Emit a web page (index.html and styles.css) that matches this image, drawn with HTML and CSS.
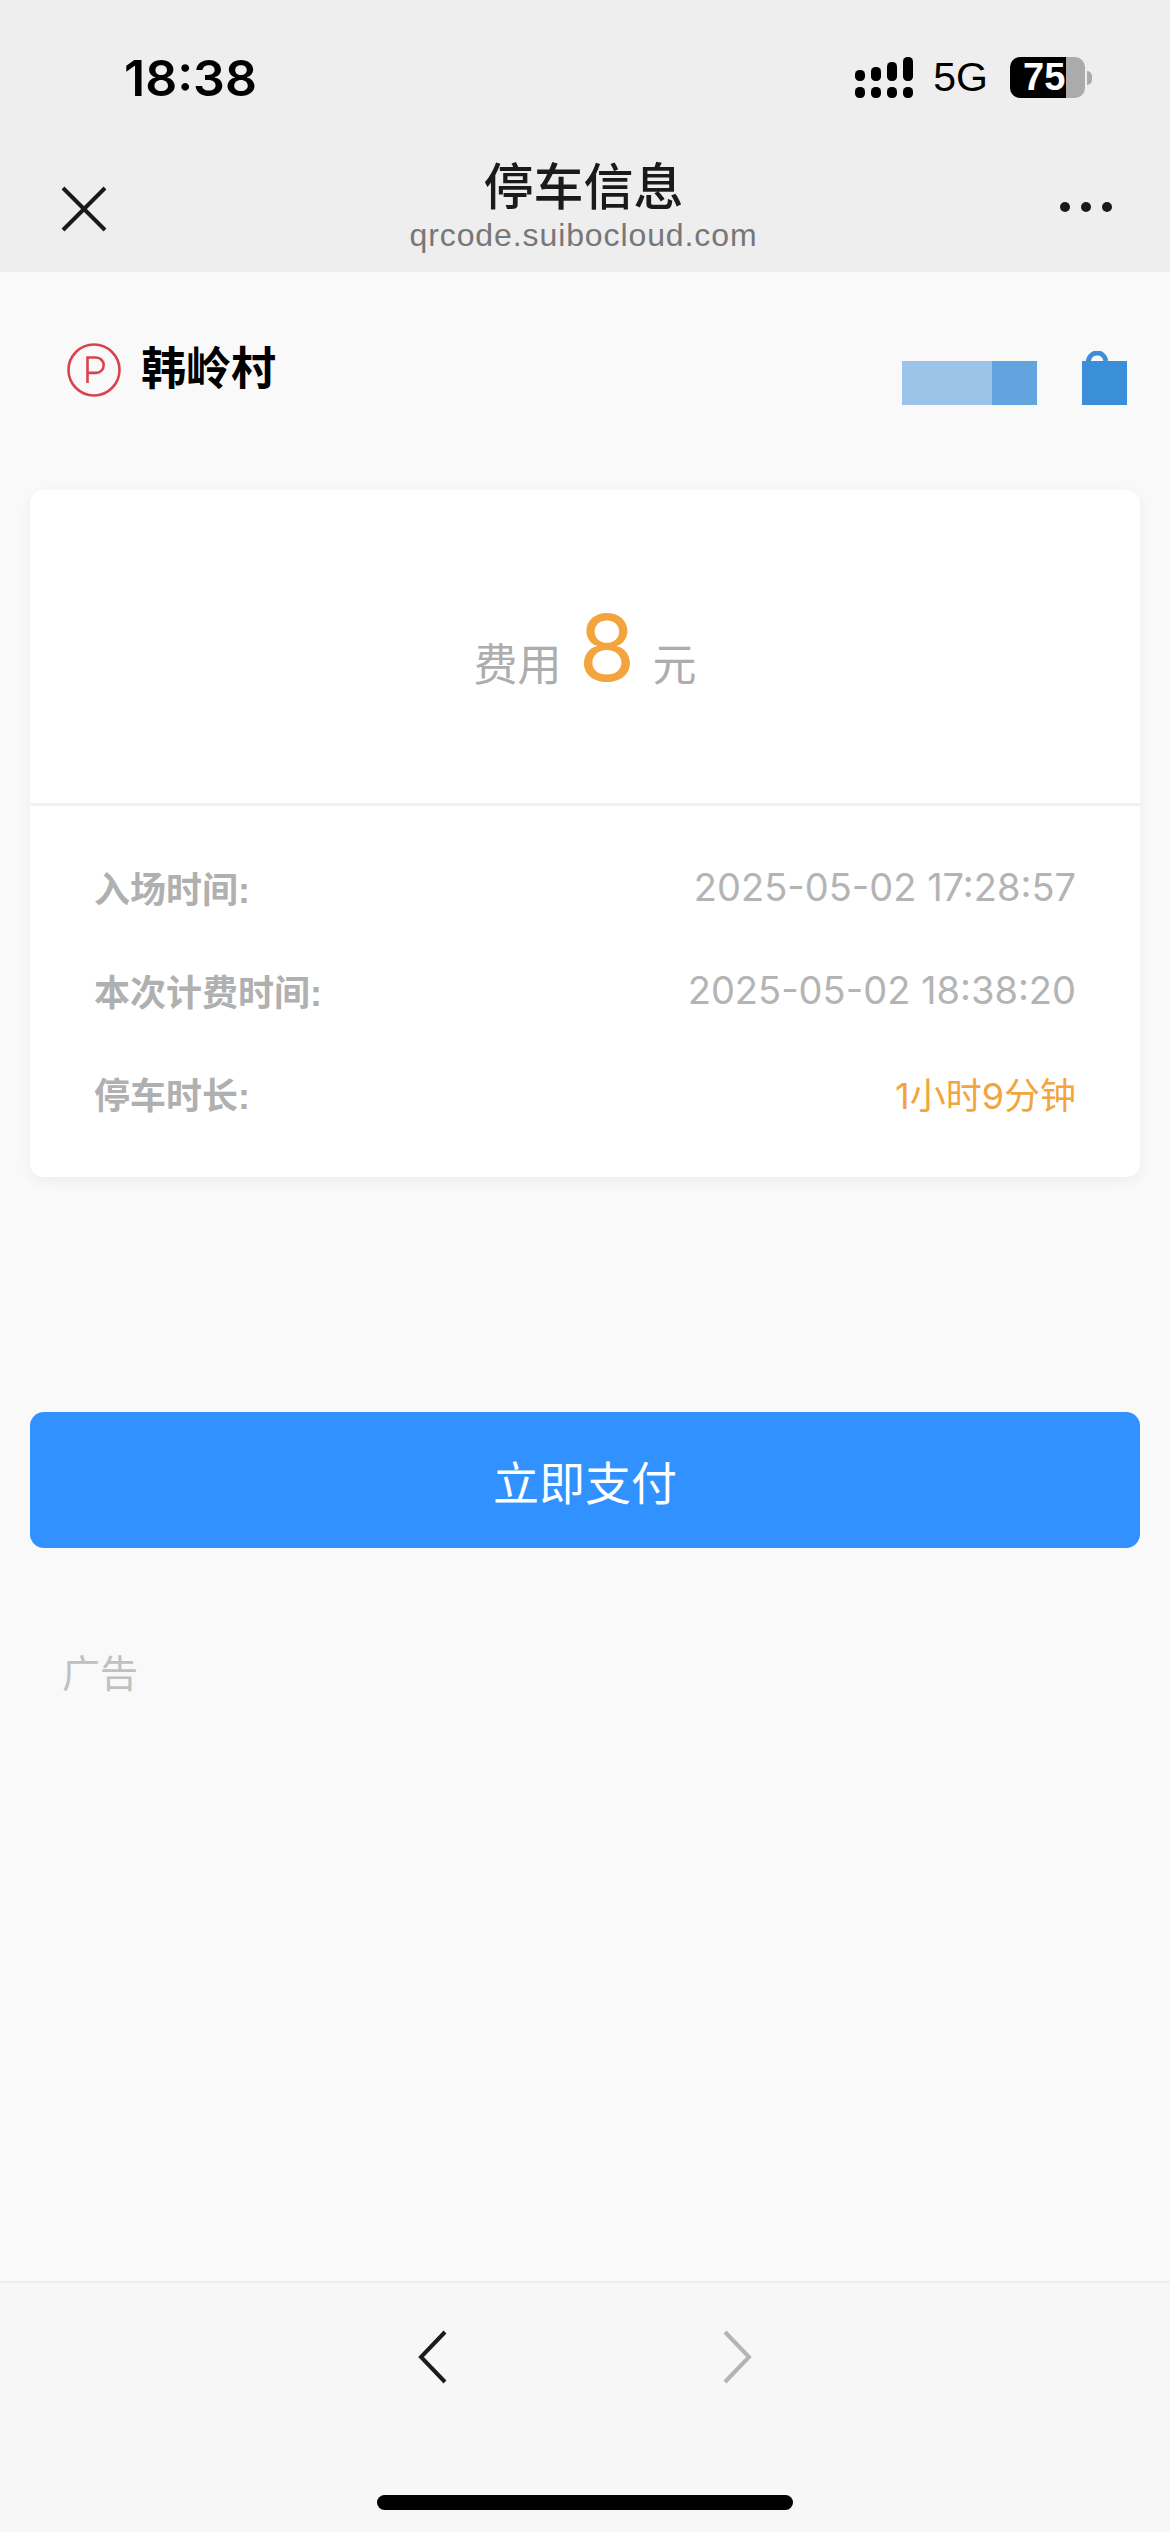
FILE: index.html
```html
<!DOCTYPE html>
<html lang="zh-CN">
<head>
    <meta charset="UTF-8">
    <meta name="viewport" content="width=device-width, initial-scale=1.0">
    <title>停车信息</title>
    <link rel="stylesheet" href="styles.css">
</head>
<body>
    <header class="top">
        <div class="status">
            <span class="clock">18:38</span>
            <div class="status-right">
                <svg class="signal" width="58" height="41" viewBox="0 0 58 41">
                    <rect x="0" y="13" width="10" height="11" rx="4.5"/>
                    <rect x="16" y="10" width="10" height="14" rx="4.5"/>
                    <rect x="32" y="5" width="10" height="19" rx="4.5"/>
                    <rect x="48" y="0" width="10" height="24" rx="4.5"/>
                    <rect x="0" y="30" width="10" height="11" rx="4.5"/>
                    <rect x="16" y="30" width="10" height="11" rx="4.5"/>
                    <rect x="32" y="30" width="10" height="11" rx="4.5"/>
                    <rect x="48" y="30" width="10" height="11" rx="4.5"/>
                </svg>
                <span class="network">5G</span>
                <div class="battery">
                    <div class="battery-body">
                        <span class="battery-level">75</span>
                    </div>
                    <span class="battery-tip"></span>
                </div>
            </div>
        </div>
        <div class="titlebar">
            <svg class="close-icon" width="46" height="46" viewBox="0 0 46 46">
                <path d="M2 2 L44 44 M44 2 L2 44" fill="none" stroke="#1a1a1a" stroke-width="4"/>
            </svg>
            <div class="title-text">
                <h1>停车信息</h1>
                <p>qrcode.suibocloud.com</p>
            </div>
            <div class="more"><i></i><i></i><i></i></div>
        </div>
    </header>

    <main class="content">
        <div class="lot">
            <div class="lot-name">
                <span class="p-icon">
                    <svg width="54" height="54" viewBox="0 0 54 54">
                        <circle cx="27" cy="27" r="25.5" fill="none" stroke="#d9434e" stroke-width="2.6"/>
                        <path d="M20.5 40 V14.5 H29 a7.7 7.7 0 0 1 0 15.4 H20.5" fill="none" stroke="#d9434e" stroke-width="2.6"/>
                    </svg>
                </span>
                <span class="lot-title">韩岭村</span>
            </div>
            <div class="lot-brand">
                <div class="smudge"><span class="smudge-light"></span><span class="smudge-dark"></span></div>
                <svg class="bag" width="45" height="54" viewBox="0 0 45 54">
                    <path d="M6 12 C7 -1 22 -1 24 10" fill="none" stroke="#3a8fd8" stroke-width="5"/>
                    <rect x="0" y="10" width="45" height="44" fill="#3a8fd8"/>
                </svg>
            </div>
        </div>

        <section class="card">
            <div class="fee">
                <span class="fee-label">费用</span>
                <span class="fee-num">8</span>
                <span class="fee-label">元</span>
            </div>
            <div class="rows">
                <div class="row">
                    <span class="row-label">入场时间:</span>
                    <span class="row-value">2025-05-02 17:28:57</span>
                </div>
                <div class="row">
                    <span class="row-label">本次计费时间:</span>
                    <span class="row-value">2025-05-02 18:38:20</span>
                </div>
                <div class="row">
                    <span class="row-label">停车时长:</span>
                    <span class="row-value orange">1小时9分钟</span>
                </div>
            </div>
        </section>

        <button class="pay-btn">立即支付</button>
        <p class="ad-label">广告</p>
    </main>

    <footer class="bottom">
        <div class="arrows">
            <svg width="30" height="54" viewBox="0 0 30 54">
                <path d="M27 2 L3 27 L27 52" fill="none" stroke="#1c1c1c" stroke-width="4"/>
            </svg>
            <svg width="30" height="54" viewBox="0 0 30 54">
                <path d="M3 2 L27 27 L3 52" fill="none" stroke="#b4b4b4" stroke-width="4"/>
            </svg>
        </div>
        <div class="home-bar"></div>
    </footer>
</body>
</html>
```

FILE: styles.css
```css
* {
    box-sizing: border-box;
}
body {
    margin: 0;
    width: 1170px;
    height: 2532px;
    background-color: #f9f9f9;
    font-family: "Liberation Sans", "Noto Sans CJK SC", sans-serif;
    display: flex;
    flex-direction: column;
    overflow: hidden;
}
.top {
    height: 272px;
    background-color: #eeeeee;
    flex-shrink: 0;
}
.status {
    height: 156px;
    display: flex;
    justify-content: space-between;
    padding: 52px 78px 0 124px;
}
.clock {
    font-family: Inter, "Liberation Sans", sans-serif;
    font-size: 50px;
    line-height: 52px;
    font-weight: 600;
    color: #000;
}
.status-right {
    display: flex;
    align-items: flex-start;
    padding-top: 5px;
}
.signal {
    fill: #000;
    margin-right: 20px;
}
.network {
    font-size: 41px;
    line-height: 41px;
    color: #000;
    margin-right: 22px;
}
.battery {
    display: flex;
    align-items: center;
}
.battery-body {
    width: 75px;
    height: 41px;
    border-radius: 10px;
    overflow: hidden;
    background: linear-gradient(to right, #000 56px, #ababab 56px);
}
.battery-level {
    display: block;
    font-size: 38px;
    line-height: 41px;
    font-weight: 700;
    color: #fff;
    padding-left: 13px;
}
.battery-tip {
    width: 5px;
    height: 14px;
    margin-left: 2px;
    background-color: #ababab;
    border-radius: 0 6px 6px 0;
}
.titlebar {
    display: flex;
    justify-content: space-between;
    align-items: flex-start;
    padding: 0 58px 0 61px;
}
.close-icon {
    margin-top: 30px;
}
.title-text {
    text-align: center;
}
.title-text h1 {
    margin: 0;
    font-size: 50px;
    line-height: 64px;
    font-weight: 500;
    color: #1a1a1a;
}
.title-text p {
    margin: 0;
    font-size: 32px;
    line-height: 30px;
    color: #777;
    letter-spacing: 0.9px;
}
.more {
    display: flex;
    gap: 11px;
    margin-top: 46px;
}
.more i {
    width: 10px;
    height: 10px;
    border-radius: 50%;
    background-color: #1a1a1a;
}
.content {
    flex: 1;
    padding: 0 30px;
}
.lot {
    display: flex;
    justify-content: space-between;
    align-items: flex-start;
    height: 218px;
    padding: 71px 13px 0 37px;
}
.lot-name {
    display: flex;
    align-items: center;
    gap: 20px;
}
.p-icon {
    display: flex;
}
.lot-title {
    font-size: 45px;
    line-height: 54px;
    font-weight: 700;
    color: #000;
}
.lot-brand {
    display: flex;
    gap: 45px;
    margin-top: 8px;
}
.smudge {
    display: flex;
    width: 135px;
    height: 44px;
    margin-top: 10px;
}
.smudge-light {
    width: 90px;
    background-color: #9cc4e8;
}
.smudge-dark {
    width: 45px;
    background-color: #62a5de;
}
.card {
    height: 687px;
    background-color: #fff;
    border-radius: 14px;
    box-shadow: 0 4px 14px rgba(0, 0, 0, 0.05);
}
.fee {
    height: 316px;
    border-bottom: 3px solid #f1f1f1;
    display: flex;
    justify-content: center;
    align-items: baseline;
    gap: 17px;
    padding-top: 110px;
}
.fee-label {
    font-size: 44px;
    color: #adadad;
}
.fee-num {
    font-family: Inter, "Liberation Sans", sans-serif;
    font-size: 92px;
    line-height: 96px;
    color: #f3a43c;
}
.rows {
    padding: 29px 64px 0;
}
.row {
    display: flex;
    justify-content: space-between;
    align-items: center;
    height: 103px;
}
.row-label {
    font-size: 36px;
    font-weight: 700;
    color: #b0b0b0;
}
.row-value {
    font-family: Inter, "Noto Sans CJK SC", sans-serif;
    font-size: 38px;
    color: #b4b4b4;
}
.orange {
    color: #f3a43c;
    font-size: 36px;
}
.pay-btn {
    display: block;
    width: 100%;
    height: 136px;
    margin-top: 235px;
    border: none;
    border-radius: 14px;
    background-color: #3091ff;
    color: #fff;
    font-family: inherit;
    font-size: 46px;
}
.ad-label {
    margin: 101px 0 0 32px;
    font-size: 38px;
    line-height: 50px;
    color: #c0c0c0;
}
.bottom {
    height: 251px;
    background-color: #f7f7f7;
    border-top: 2px solid #eeeeee;
    flex-shrink: 0;
}
.arrows {
    display: flex;
    justify-content: center;
    gap: 274px;
    padding-top: 47px;
}
.home-bar {
    width: 416px;
    height: 15px;
    border-radius: 8px;
    background-color: #000;
    margin: 111px 0 0 377px;
}
```
